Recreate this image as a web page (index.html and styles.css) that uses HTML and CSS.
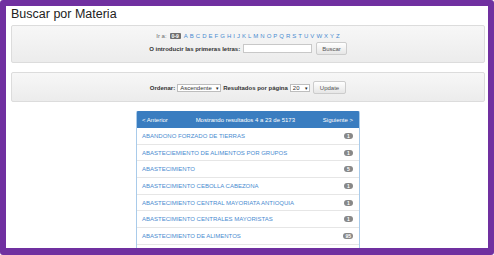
FILE: index.html
```html
<!DOCTYPE html>
<html lang="es">
<head>
<meta charset="utf-8">
<title>Buscar por Materia</title>
<link rel="stylesheet" href="styles.css">
</head>
<body>
<div class="frame">
  <div class="page">
    <h1 class="title">Buscar por Materia</h1>

    <div class="well">
      <div class="az-row">
        <span class="muted">Ir a:</span>
        <span class="badge-dark">0-9</span>
        <a href="#">A</a> <a href="#">B</a> <a href="#">C</a> <a href="#">D</a> <a href="#">E</a> <a href="#">F</a> <a href="#">G</a> <a href="#">H</a> <a href="#">I</a> <a href="#">J</a> <a href="#">K</a> <a href="#">L</a> <a href="#">M</a> <a href="#">N</a> <a href="#">O</a> <a href="#">P</a> <a href="#">Q</a> <a href="#">R</a> <a href="#">S</a> <a href="#">T</a> <a href="#">U</a> <a href="#">V</a> <a href="#">W</a> <a href="#">X</a> <a href="#">Y</a> <a href="#">Z</a>
      </div>
      <form class="ctrl-row">
        <label class="strong">O introducir las primeras letras:</label>
        <input class="text-input" type="text">
        <button class="btn" type="button">Buscar</button>
      </form>
    </div>

    <div class="well well-sort">
      <form class="ctrl-row">
        <label class="strong">Ordenar:</label>
        <span class="select select-order"><span>Ascendente</span><span class="caret">&#9662;</span></span>
        <label class="strong">Resultados por página</label>
        <span class="select select-rpp"><span>20</span><span class="caret">&#9662;</span></span>
        <button class="btn btn-update" type="button">Update</button>
      </form>
    </div>

    <div class="panel">
      <div class="panel-heading">
        <a href="#">&lt; Anterior</a>
        <span>Mostrando resultados 4 a 23 de 5173</span>
        <a href="#">Siguiente &gt;</a>
      </div>
      <ul class="list">
        <li class="item"><a href="#">ABANDONO FORZADO DE TIERRAS</a><span class="badge">1</span></li>
        <li class="item"><a href="#">ABASTECIEMIENTO DE ALIMENTOS POR GRUPOS</a><span class="badge">1</span></li>
        <li class="item"><a href="#">ABASTECIMIENTO</a><span class="badge">5</span></li>
        <li class="item"><a href="#">ABASTECIMIENTO CEBOLLA CABEZONA</a><span class="badge">1</span></li>
        <li class="item"><a href="#">ABASTECIMIENTO CENTRAL MAYORIATA ANTIOQUIA</a><span class="badge">1</span></li>
        <li class="item"><a href="#">ABASTECIMIENTO CENTRALES MAYORISTAS</a><span class="badge">1</span></li>
        <li class="item"><a href="#">ABASTECIMIENTO DE ALIMENTOS</a><span class="badge">95</span></li>
        <li class="item item-more"></li>
      </ul>
    </div>
  </div>
</div>
</body>
</html>
```

FILE: styles.css
```css
html, body {
  margin: 0;
  padding: 0;
  background: #ffffff;
}

body {
  font-family: "Liberation Sans", Arial, sans-serif;
  color: #333333;
}

.frame {
  box-sizing: border-box;
  width: 494px;
  height: 255px;
  border: 6px solid #7030a0;
  border-bottom-width: 7px;
  border-radius: 3px;
  overflow: hidden;
  background: #ffffff;
}

.page {
  padding: 0 3px 0 5px;
}

.title {
  margin: 0 0 3px;
  font-size: 12.5px;
  line-height: 16px;
  font-weight: normal;
  color: #222222;
}

.well {
  border: 1px solid #dcdcdc;
  border-radius: 2px;
  background: linear-gradient(#f7f7f7, #ececec);
  padding: 6px 0 7px;
  display: flex;
  flex-direction: column;
  align-items: center;
  font-size: 6px;
}

.well-sort {
  margin-top: 9px;
  padding: 8px 0 7px;
}

.az-row {
  line-height: 8px;
  height: 8px;
  margin-bottom: 2px;
  display: flex;
  align-items: center;
  gap: 2px;
}

.az-row a {
  color: #4a8bd0;
  text-decoration: none;
}

.muted {
  color: #6a6a6a;
  margin-right: 1px;
}

.badge-dark {
  background: #707070;
  color: #ffffff;
  font-weight: bold;
  font-size: 5px;
  line-height: 6px;
  padding: 0 2px;
  border-radius: 1px;
  margin-right: 1px;
}

.ctrl-row {
  margin: 0;
  display: flex;
  align-items: center;
  gap: 2px;
  height: 13px;
}

.strong {
  font-weight: bold;
  color: #333333;
}

.text-input {
  box-sizing: border-box;
  width: 69px;
  height: 9px;
  margin: 0 1px;
  padding: 0;
  border: 1px solid #c8c8c8;
  background: #ffffff;
}

.btn {
  box-sizing: border-box;
  height: 13px;
  padding: 0 5px;
  margin-left: 1px;
  font-family: "Liberation Sans", Arial, sans-serif;
  font-size: 6px;
  color: #555555;
  border: 1px solid #cccccc;
  border-radius: 2px;
  background: linear-gradient(#ffffff, #e6e6e6);
}

.btn-update {
  padding: 0 6px;
}

.select {
  box-sizing: border-box;
  height: 8px;
  display: flex;
  align-items: center;
  justify-content: space-between;
  border: 1px solid #bdbdbd;
  background: #ffffff;
  color: #333333;
  padding: 0 1px 0 2px;
  font-size: 6px;
}

.select-order { width: 44px; }
.select-rpp { width: 20px; }

.caret {
  font-size: 5px;
  color: #222222;
}

.panel {
  width: 224px;
  margin: 9px auto 0;
  box-sizing: border-box;
  border: 1px solid #a9cbea;
  border-top-color: #3a7dc0;
  border-radius: 2px;
  font-size: 6px;
}

.panel-heading {
  height: 16px;
  background: #3a7dc0;
  color: #ffffff;
  display: flex;
  align-items: center;
  justify-content: space-between;
  padding: 0 6px 0 5px;
}

.panel-heading a {
  color: #ffffff;
  text-decoration: none;
}

.list {
  list-style: none;
  margin: 0;
  padding: 0;
}

.item {
  box-sizing: border-box;
  height: 16.7px;
  display: flex;
  align-items: center;
  justify-content: space-between;
  padding: 0 6px 0 5px;
  border-bottom: 1px solid #e6e6e6;
}

.item a {
  color: #4a8bd0;
  text-decoration: none;
}

.badge {
  min-width: 9px;
  height: 6px;
  box-sizing: border-box;
  padding: 0 2px;
  border-radius: 3px;
  background: #888888;
  color: #ffffff;
  font-size: 5px;
  line-height: 6px;
  font-weight: bold;
  text-align: center;
}
```
